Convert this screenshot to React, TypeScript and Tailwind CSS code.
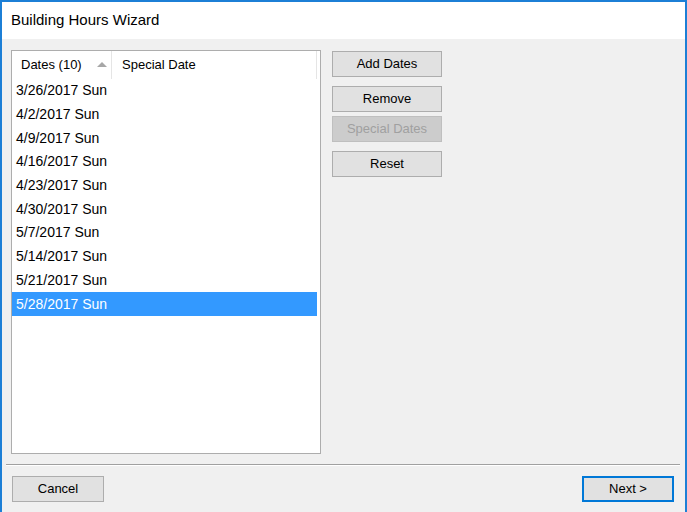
import React from "react";

const dates = [
  "3/26/2017 Sun",
  "4/2/2017 Sun",
  "4/9/2017 Sun",
  "4/16/2017 Sun",
  "4/23/2017 Sun",
  "4/30/2017 Sun",
  "5/7/2017 Sun",
  "5/14/2017 Sun",
  "5/21/2017 Sun",
  "5/28/2017 Sun",
];

function Btn({ children, disabled }: { children: React.ReactNode; disabled?: boolean }) {
  return (
    <div
      className={
        "h-[26px] w-[110px] flex items-center justify-center text-[13px] border " +
        (disabled
          ? "bg-[#cccccc] border-[#bfbfbf] text-[#a0a0a0]"
          : "bg-[#e1e1e1] border-[#adadad] text-black")
      }
    >
      {children}
    </div>
  );
}

export default function App() {
  return (
    <div
      className="w-[687px] h-[512px] flex flex-col border-l-2 border-t-2 border-r-2 border-[#1c7fd6] bg-[#f0f0f0] text-black"
      style={{ fontFamily: '"Liberation Sans", Arial, sans-serif' }}
    >
      <div className="h-[37px] bg-white flex items-center pl-[9px] text-[15px] shrink-0">
        Building Hours Wizard
      </div>
      <div className="flex-1 flex flex-col">
        <div className="flex pt-[11px] pl-[9px]">
          <div className="w-[310px] h-[404px] border border-[#adadad] bg-white flex flex-col">
            <div className="h-[28px] flex items-stretch text-[13px] shrink-0">
              <div className="w-[99px] flex items-center pl-[9px] relative">
                <span>Dates (10)</span>
                <svg className="absolute left-[85px] top-[11px]" width="10" height="5" viewBox="0 0 10 5">
                  <polygon points="0,5 5,0 10,5" fill="#a7a7a7" />
                </svg>
              </div>
              <div className="w-px bg-[#e5e5e5]" />
              <div className="w-[204px] flex items-center pl-[10px]">Special Date</div>
              <div className="w-px bg-[#e5e5e5]" />
            </div>
            {dates.map((d, i) => (
              <div
                key={d}
                className={
                  "h-[23.7px] flex items-center pl-[4px] text-[14px] w-[305px] " +
                  (i === dates.length - 1 ? "bg-[#3399ff] text-white" : "")
                }
              >
                {d}
              </div>
            ))}
          </div>
          <div className="ml-[11px] mt-[1px] flex flex-col">
            <Btn>Add Dates</Btn>
            <div className="h-[9px]" />
            <Btn>Remove</Btn>
            <div className="h-[4px]" />
            <Btn disabled>Special Dates</Btn>
            <div className="h-[9px]" />
            <Btn>Reset</Btn>
          </div>
        </div>
        <div className="mt-[10px] ml-[4px] mr-[5px] border-t border-[#a0a0a0] border-b border-b-white" />
        <div className="flex justify-between pl-[10px] pr-[11px] mt-[10px]">
          <div className="h-[26px] w-[92px] flex items-center justify-center text-[13px] border border-[#adadad] bg-[#e1e1e1]">
            Cancel
          </div>
          <div className="h-[26px] w-[92px] flex items-center justify-center text-[13px] border-2 border-[#0078d7] bg-[#e1e1e1]">
            Next &gt;
          </div>
        </div>
      </div>
    </div>
  );
}
